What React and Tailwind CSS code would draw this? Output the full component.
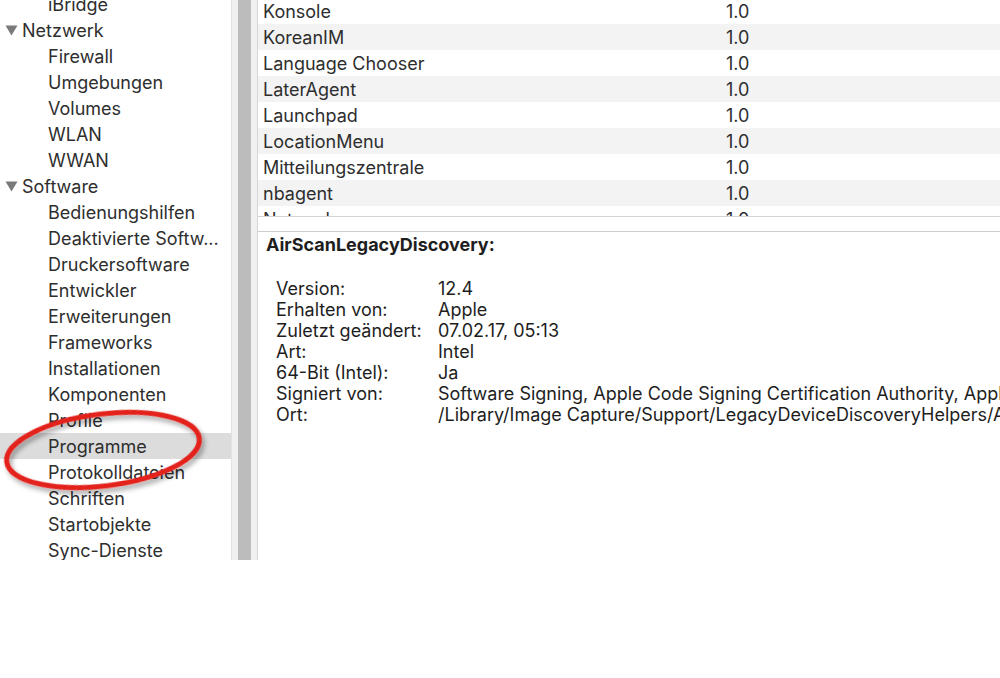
import React from 'react';

const SIDEBAR = [
  { label: 'iBridge', level: 1 },
  { label: 'Netzwerk', level: 0 },
  { label: 'Firewall', level: 1 },
  { label: 'Umgebungen', level: 1 },
  { label: 'Volumes', level: 1 },
  { label: 'WLAN', level: 1 },
  { label: 'WWAN', level: 1 },
  { label: 'Software', level: 0 },
  { label: 'Bedienungshilfen', level: 1 },
  { label: 'Deaktivierte Softw...', level: 1 },
  { label: 'Druckersoftware', level: 1 },
  { label: 'Entwickler', level: 1 },
  { label: 'Erweiterungen', level: 1 },
  { label: 'Frameworks', level: 1 },
  { label: 'Installationen', level: 1 },
  { label: 'Komponenten', level: 1 },
  { label: 'Profile', level: 1 },
  { label: 'Programme', level: 1, selected: true },
  { label: 'Protokolldateien', level: 1 },
  { label: 'Schriften', level: 1 },
  { label: 'Startobjekte', level: 1 },
  { label: 'Sync-Dienste', level: 1 },
];

const APPS = [
  'Konsole',
  'KoreanIM',
  'Language Chooser',
  'LaterAgent',
  'Launchpad',
  'LocationMenu',
  'Mitteilungszentrale',
  'nbagent',
  'Network',
];

const DETAILS = [
  ['Version:', '12.4'],
  ['Erhalten von:', 'Apple'],
  ['Zuletzt geändert:', '07.02.17, 05:13'],
  ['Art:', 'Intel'],
  ['64-Bit (Intel):', 'Ja'],
  ['Signiert von:', 'Software Signing, Apple Code Signing Certification Authority, Apple Root CA'],
  ['Ort:', '/Library/Image Capture/Support/LegacyDeviceDiscoveryHelpers/AirScanLegacyDiscovery.app'],
];

const Triangle = () => (
  <svg width="13" height="11" viewBox="0 0 13 11" className="shrink-0">
    <path d="M0.5 0.5 L12.5 0.5 L6.5 10.5 Z" fill="#7a7a7a" />
  </svg>
);

const Sidebar = () => (
  <div className="w-[231px] shrink-0 bg-white overflow-hidden">
    <ul className="-mt-[9px]">
      {SIDEBAR.map(item => (
        <li
          key={item.label}
          className={`h-[26px] flex items-center whitespace-nowrap ${item.selected ? 'bg-[#dcdcdc]' : ''} ${item.level === 0 ? 'pl-[5px] gap-[4px]' : 'pl-[48px]'}`}
        >
          {item.level === 0 && <Triangle />}
          <span>{item.label}</span>
        </li>
      ))}
    </ul>
  </div>
);

const Splitter = () => (
  <div className="w-[27px] shrink-0 flex">
    <div className="w-[7px] bg-[#f0f0f0] border-l border-[#e2e2e2]" />
    <div className="w-[13px] bg-[#bcbcbc]" />
    <div className="w-[7px] bg-[#f0f0f0] border-r border-[#d6d6d6]" />
  </div>
);

export default function App() {
  return (
    <div className="w-[1000px] h-[678px] bg-white overflow-hidden text-[18px] text-[#2e2e2e]" style={{ fontFamily: 'Inter, "Liberation Sans", sans-serif' }}>
      <div className="relative h-[560px] flex">
        <Sidebar />
        <Splitter />

        <div className="flex-1 flex flex-col min-w-0">
          <div className="h-[217px] shrink-0 overflow-hidden border-b border-[#d4d4d4]">
            <div className="-mt-[2px]">
              {APPS.map((name, i) => (
                <div key={name} className={`h-[26px] flex items-center whitespace-nowrap ${i % 2 === 1 ? 'bg-[#f3f3f3]' : 'bg-white'}`}>
                  <span className="w-[468px] pl-[5px] shrink-0">{name}</span>
                  <span>1.0</span>
                </div>
              ))}
            </div>
          </div>
          <div className="h-[15px] shrink-0 bg-white border-b border-[#cdcdcd]" />

          <div className="flex-1 overflow-hidden pl-[8px] text-[18px] text-[#1e1e1e]">
            <h2 className="font-bold text-[18px] leading-[24px] mt-[1px]">AirScanLegacyDiscovery:</h2>
            <div className="mt-[21px] pl-[10px]">
              {DETAILS.map(([label, value]) => (
                <div key={label} className="flex h-[21px] items-center whitespace-nowrap">
                  <span className="w-[162px] shrink-0">{label}</span>
                  <span>{value}</span>
                </div>
              ))}
            </div>
          </div>
        </div>

        {/* red hand-drawn mark round "Programme" */}
        <svg className="absolute left-0 top-[400px] pointer-events-none" width="220" height="100" viewBox="0 0 220 100">
          <defs>
            <filter id="shadow" x="-10%" y="-20%" width="120%" height="150%">
              <feDropShadow dx="2" dy="4" stdDeviation="2.5" floodColor="#000" floodOpacity="0.35" />
            </filter>
          </defs>
          <ellipse cx="103" cy="50" rx="97" ry="36" transform="rotate(-7 103 50)" fill="none" stroke="#e3201b" strokeWidth="5" filter="url(#shadow)" />
        </svg>
      </div>
    </div>
  );
}
